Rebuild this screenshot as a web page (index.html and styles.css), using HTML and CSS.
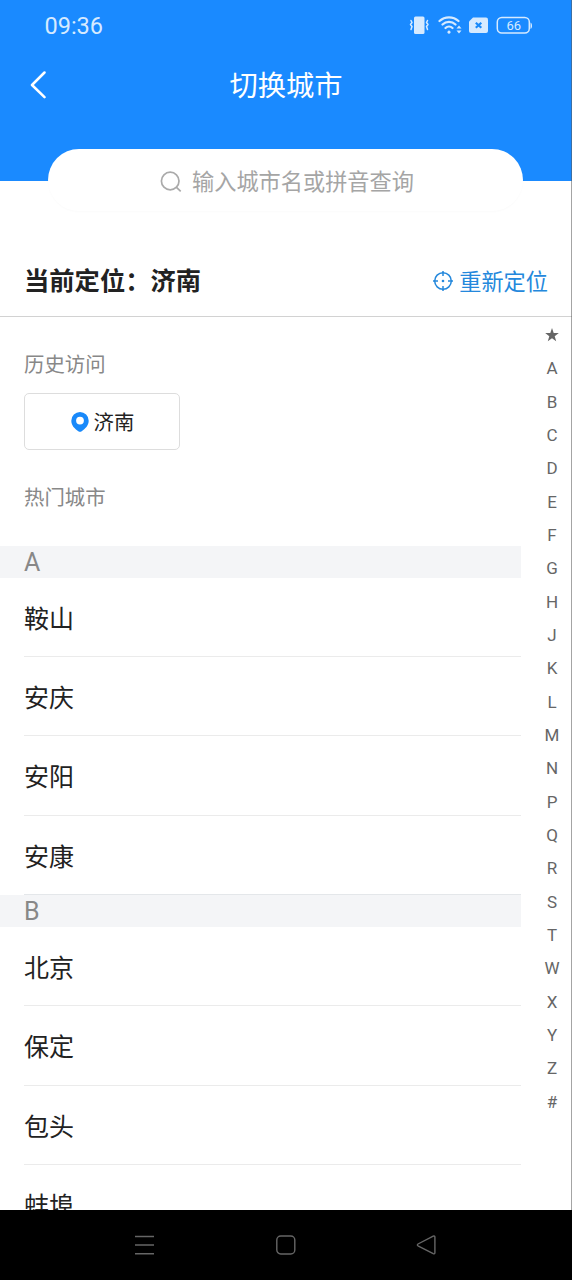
FILE: index.html
```
<!DOCTYPE html>
<html lang="zh-CN">
<head>
<meta charset="utf-8">
<title>切换城市</title>
<link rel="stylesheet" href="styles.css">
</head>
<body>
<div class="screen">
  <header class="header">
    <div class="status">
      <span class="time">09:36</span>
      <svg class="status-icons" width="124" height="22" viewBox="0 0 124 22">
        <g fill="#d6eaff">
          <rect x="5" y="1.500" width="10.500" height="17.500" rx="1.500"/>
          <path d="M40 15.600a1.600 1.600 0 1 0 .01 0zM47.500 13.500l2.500-3 2.500 3zM47.500 15.500l2.500 3 2.500-3z"/>
          <path d="M64 2.500h13a2 2 0 0 1 2 2v11.500a2 2 0 0 1-2 2H62a2 2 0 0 1-2-2V6.500z"/>
          <path d="M121.500 7.500c2 .6 2 6 0 6.500z"/>
        </g>
        <g fill="none" stroke="#d6eaff" stroke-width="1.500" stroke-linecap="round" stroke-linejoin="round">
          <path d="M2 5.500l1 2-1.500 2 1.500 2-1 3M18.500 5.500l-1 2 1.500 2-1.500 2 1 3"/>
          <path stroke-width="2.300" d="M30.500 6a14 14 0 0 1 19 0M33.500 9.500a9.500 9.500 0 0 1 13 0M36.500 13a5 5 0 0 1 7 0"/>
          <rect x="88.300" y="2.500" width="32" height="15.500" rx="4.500"/>
        </g>
        <path d="M66.800 7.700l5.500 5M72.300 7.700l-5.500 5" stroke="#1989fa" stroke-width="2.200"/>
        <text class="battery" x="104.700" y="15" text-anchor="middle">66</text>
      </svg>
    </div>
    <div class="navbar">
      <svg class="back" width="18" height="28" viewBox="0 0 18 28"><path d="M14.500 1.500L2 14l12.500 12.200" fill="none" stroke="#fff" stroke-width="2.500" stroke-linecap="round" stroke-linejoin="round"/></svg>
      <h1 class="title">切换城市</h1>
    </div>
    <div class="search">
      <svg width="24" height="24" viewBox="0 0 24 24" fill="none" stroke="#aaa" stroke-width="1.700"><circle cx="11.200" cy="11" r="8.800"/><path d="M17.500 17.300l4.200 4"/></svg>
      <span>输入城市名或拼音查询</span>
    </div>
  </header>
  <section class="location">
    <strong>当前定位：济南</strong>
    <a class="relocate">
      <svg width="20" height="20" viewBox="0 0 20 20" fill="none" stroke="#2488dc" stroke-width="1.500"><circle cx="10" cy="10" r="8.300"/><path d="M10 0v5M10 15v5M0 10h5M15 10h5"/><circle cx="10" cy="10" r="1.300" fill="#2488dc" stroke="none"/></svg>
      <span>重新定位</span>
    </a>
  </section>
  <main class="body">
    <div class="cities">
      <h2 class="label">历史访问</h2>
      <div class="chip">
        <svg width="18" height="20" viewBox="0 0 18 20"><path fill="#1989fa" fill-rule="evenodd" d="M9 0a8.700 8.700 0 0 1 8.700 8.700c0 4.800-3.500 8-7 10.600q-1.700 1-3.400 0C3.800 16.700.3 13.500.3 8.700A8.700 8.700 0 0 1 9 0zm0 4.700a3.900 3.900 0 1 0 0 7.800 3.900 3.900 0 0 0 0-7.800z"/></svg>
        <span>济南</span>
      </div>
      <h2 class="label hot">热门城市</h2>
      <h3 class="letter">A</h3>
      <ul class="group"><li>鞍山</li><li>安庆</li><li>安阳</li><li>安康</li></ul>
      <h3 class="letter">B</h3>
      <ul class="group"><li>北京</li><li>保定</li><li>包头</li><li>蚌埠</li></ul>
    </div>
    <nav class="index">
      <span><svg width="14" height="14" viewBox="0 0 14 14"><path fill="#666" d="M7 0l1.700 4.900 5.100.1-4.100 3.200 1.500 5L7 10.300l-4.200 2.900 1.500-5L.2 5l5.100-.1z"/></svg></span>
      <span>A</span><span>B</span><span>C</span><span>D</span><span>E</span><span>F</span><span>G</span><span>H</span><span>J</span><span>K</span><span>L</span><span>M</span><span>N</span><span>P</span><span>Q</span><span>R</span><span>S</span><span>T</span><span>W</span><span>X</span><span>Y</span><span>Z</span><span>#</span>
    </nav>
  </main>
  <footer class="system">
    <svg width="22" height="22" viewBox="0 0 22 22"><path d="M1 2.500h19M1 11h19M1 19.800h19"/></svg>
    <svg width="22" height="22" viewBox="0 0 22 22"><rect x="1.800" y="2" width="18" height="18" rx="4"/></svg>
    <svg width="22" height="22" viewBox="0 0 22 22"><path d="M18.200 2.100L3 10q-1.200.9 0 1.800l15.200 7.900q1.600.6 1.700-1V3.100q-.1-1.600-1.700-1z"/></svg>
  </footer>
  <div class="edge"></div>
</div>
</body>
</html>
```
FILE: styles.css
```
* { box-sizing: border-box; margin: 0; padding: 0; }
body {
  background: #fff;
  color: #222;
  font-family: Roboto, "Noto Sans CJK SC", sans-serif;
}
.screen {
  position: relative;
  display: flex;
  flex-direction: column;
  height: 1280px;
  overflow: hidden;
}
.header { height: 181px; flex: none; background: #1a8aff; }
.status {
  display: flex;
  align-items: center;
  justify-content: space-between;
  height: 52px;
  padding: 0 39px 0 44.500px;
}
.time { color: #d6eaff; font-size: 23.500px; }
.status-icons { display: block; }
.battery { fill: #d6eaff; font-size: 13px; }
.navbar {
  display: grid;
  grid-template-columns: 60px 1fr 60px;
  align-items: center;
  height: 65px;
}
.back { margin-left: 30px; }
.title {
  padding-top: 5px;
  color: #fff;
  font-size: 28.300px;
  font-weight: 400;
  line-height: 40px;
  text-align: center;
}
.search {
  display: flex;
  align-items: center;
  justify-content: center;
  gap: 9px;
  height: 62px;
  margin: 32px 49px 0 48px;
  padding: 4px 0 0 2px;
  border-radius: 31px;
  background: #fff;
  box-shadow: 0 1px 2px rgba(0, 0, 0, .02);
  color: #a5a5a5;
  font-size: 22.200px;
  line-height: 32px;
}
.search svg { margin-top: -1px; }
.location {
  display: flex;
  flex: none;
  align-items: flex-end;
  justify-content: space-between;
  height: 136px;
  padding: 0 24px 16px;
  border-bottom: 1px solid #d2d2d2;
}
.location strong { font-size: 25.300px; line-height: 36px; font-weight: 700; }
.relocate {
  display: flex;
  align-items: center;
  gap: 6px;
  color: #2488dc;
  font-size: 22.200px;
  line-height: 36px;
}
.relocate svg { margin-top: -3px; }
.body { display: flex; flex: 1; min-height: 0; overflow: hidden; }
.cities { width: 521px; flex: none; }
.label {
  padding: 33px 24px 0;
  color: #888;
  font-size: 20.400px;
  font-weight: 400;
  line-height: 30px;
}
.chip {
  display: flex;
  align-items: center;
  justify-content: center;
  gap: 5px;
  width: 156px;
  height: 57px;
  margin: 13px 0 0 24px;
  padding-left: 1px;
  border: 1px solid #ddd;
  border-radius: 5px;
  font-size: 20.400px;
  line-height: 30px;
}
.chip span { padding-top: 2px; }
.hot { padding-bottom: 32.500px; }
.letter {
  height: 32px;
  padding-left: 24px;
  background: #f4f5f7;
  color: #888;
  font-size: 25px;
  font-weight: 400;
  line-height: 33px;
}
.group { list-style: none; padding-left: 24px; }
.group li {
  height: 79.370px;
  padding-top: 3px;
  border-bottom: 1px solid #ebebeb;
  font-size: 25px;
  line-height: 78px;
}
.group li:last-child { border-bottom-color: #e4e7ea; }
.index {
  display: flex;
  flex: none;
  flex-direction: column;
  width: 28px;
  margin: 0 6px 0 17px;
  padding-top: 1.500px;
}
.index span {
  display: flex;
  align-items: center;
  justify-content: center;
  flex: none;
  height: 33.340px;
  color: #666;
  font-size: 17px;
}
.system {
  display: flex;
  flex: none;
  align-items: center;
  justify-content: space-between;
  height: 70px;
  padding: 0 135px 0 134px;
  background: #000;
}
.system svg { fill: none; stroke: #666; stroke-width: 1.400; }
.edge {
  position: absolute;
  top: 0;
  right: 0;
  width: 1px;
  height: 1210px;
  background: rgba(90, 90, 90, .55);
}
```
